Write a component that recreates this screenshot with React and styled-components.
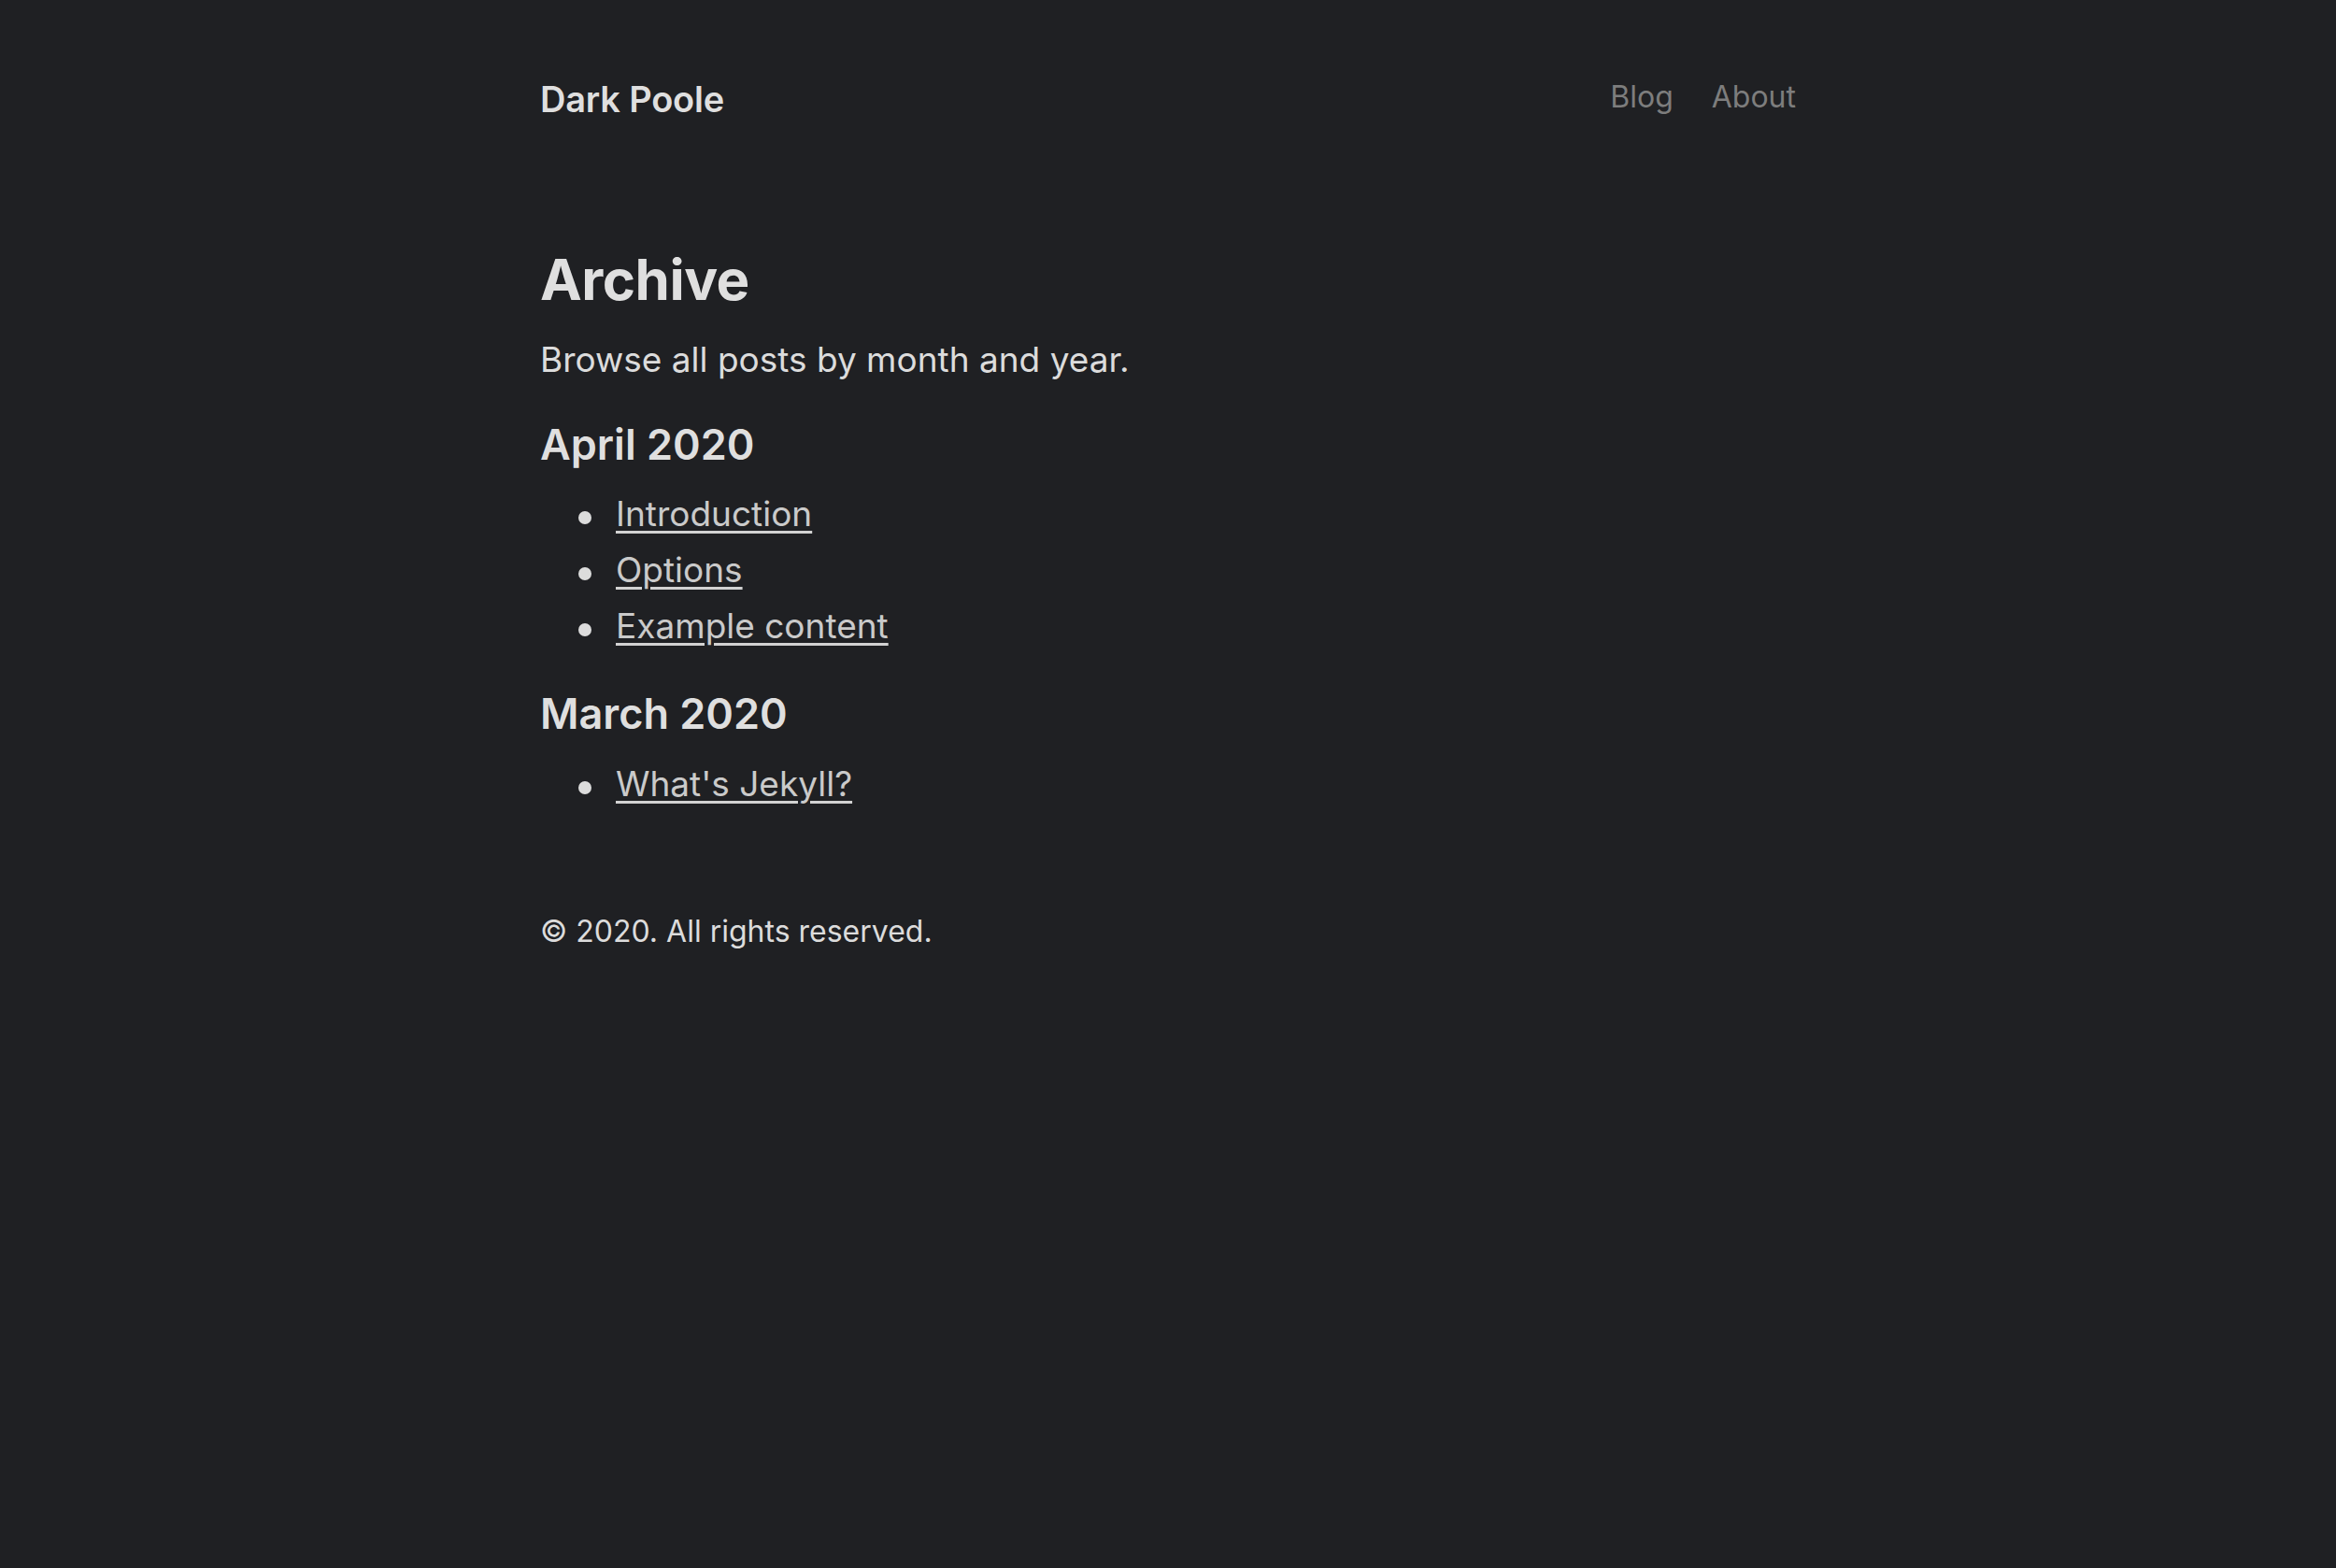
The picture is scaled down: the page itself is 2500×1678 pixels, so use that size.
import React from "react";
import styled, { createGlobalStyle } from "styled-components";

const archive = [
  {
    month: "April 2020",
    posts: ["Introduction", "Options", "Example content"],
  },
  {
    month: "March 2020",
    posts: ["What's Jekyll?"],
  },
];

export default function App() {
  return (
    <React.Fragment>
      <GlobalStyle />
      <Container>
        <Masthead>
          <Title href="#">Dark Poole</Title>
          <Nav>
            <NavLink href="#">Blog</NavLink>
            <NavLink href="#">About</NavLink>
          </Nav>
        </Masthead>
        <Main>
          <PageTitle>Archive</PageTitle>
          <Lead>Browse all posts by month and year.</Lead>
          {archive.map((group) => (
            <section key={group.month}>
              <MonthTitle>{group.month}</MonthTitle>
              <PostList>
                {group.posts.map((post) => (
                  <PostItem key={post}>
                    <PostLink href="#">{post}</PostLink>
                  </PostItem>
                ))}
              </PostList>
            </section>
          ))}
        </Main>
        <Footer>© 2020. All rights reserved.</Footer>
      </Container>
    </React.Fragment>
  );
}

const GlobalStyle = createGlobalStyle`
  html, body {
    margin: 0;
    padding: 0;
    min-height: 100%;
    background-color: #1f2023;
  }
  body {
    font-family: Inter, "Noto Sans", "Liberation Sans", sans-serif;
    font-size: 37px;
    line-height: 58px;
    color: #dcdcdc;
    min-height: 1678px;
  }
`;

const Container = styled.div`
  width: 1344px;
  margin: 0 auto;
`;

const Masthead = styled.header`
  display: flex;
  justify-content: space-between;
  align-items: center;
  padding-top: 78px;
  height: 56px;
`;

const Title = styled.a`
  font-size: 38px;
  font-weight: 600;
  color: #dfdfdf;
  text-decoration: none;
  letter-spacing: -0.2px;
`;

const Nav = styled.nav`
  display: flex;
  gap: 41px;
  margin-top: -4px;
`;

const NavLink = styled.a`
  font-size: 32px;
  color: #7d7d7d;
  text-decoration: none;
`;

const Main = styled.main`
  padding-top: 128px;
`;

const PageTitle = styled.h1`
  margin: 0 0 19px;
  font-size: 60px;
  font-weight: 700;
  line-height: 1.25;
  color: #dfdfdf;
  letter-spacing: -0.5px;
`;

const Lead = styled.p`
  margin: 0 0 34px;
`;

const MonthTitle = styled.h2`
  margin: 0 0 16px;
  font-size: 45px;
  font-weight: 600;
  line-height: 1.25;
  color: #dfdfdf;
`;

const PostList = styled.ul`
  margin: 0 0 36px;
  padding-left: 81px;
  list-style: none;
  line-height: 60px;
`;

const PostItem = styled.li`
  position: relative;

  &::before {
    content: "";
    position: absolute;
    left: -40px;
    top: 27px;
    width: 14px;
    height: 14px;
    border-radius: 50%;
    background-color: #dcdcdc;
  }
`;

const PostLink = styled.a`
  color: #cacaca;
  text-decoration: underline;
  text-decoration-thickness: 3px;
  text-underline-offset: 5px;
  text-decoration-color: #d2d2d2;
`;

const Footer = styled.footer`
  margin-top: 99px;
  font-size: 32px;
  color: #dcdcdc;
`;
